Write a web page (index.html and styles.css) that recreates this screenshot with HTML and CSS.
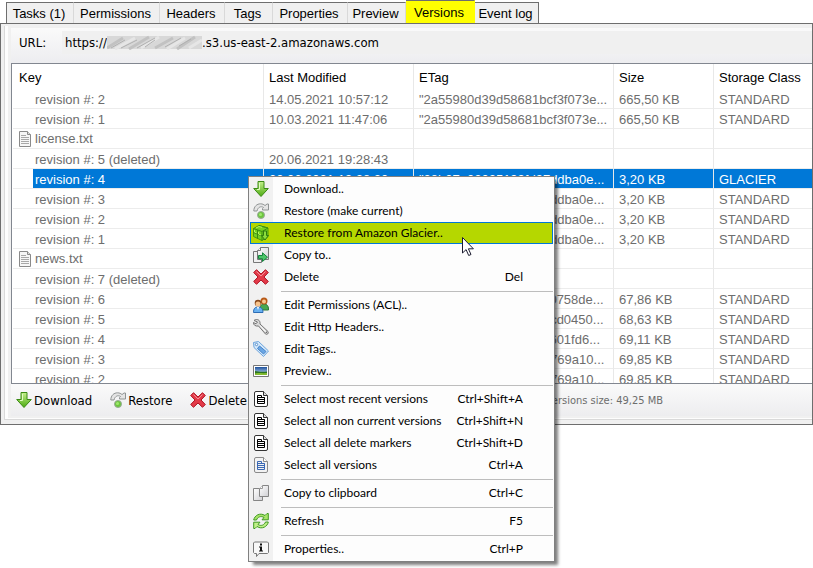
FILE: index.html
```html
<!DOCTYPE html>
<html lang="en">
<head>
<meta charset="utf-8">
<title>Versions</title>
<link rel="stylesheet" href="styles.css">
</head>
<body>

<!-- icon sprite -->
<svg class="sprite" aria-hidden="true">
  <defs>
    <linearGradient id="green" x1="0" y1="0" x2="0" y2="1">
      <stop offset="0" stop-color="#c4f08c"/>
      <stop offset="1" stop-color="#4caa10"/>
    </linearGradient>
    <linearGradient id="sky" x1="0" y1="0" x2="0" y2="1">
      <stop offset="0" stop-color="#1b4f9c"/>
      <stop offset="1" stop-color="#d8ecf8"/>
    </linearGradient>
    <linearGradient id="paper" x1="0" y1="0" x2="1" y2="1">
      <stop offset="0" stop-color="#ffffff"/>
      <stop offset="1" stop-color="#d0d0d4"/>
    </linearGradient>
  </defs>
  <symbol id="i-file" viewBox="0 0 16 16">
    <path d="M2.500.5h8l3 3v12h-11z" fill="#f6f6f6" stroke="#8a8a8a"/>
    <path d="M10.500.5v3h3" fill="#ddd" stroke="#8a8a8a"/>
    <path d="M4 4.500h5M4 6.500h8M4 8.500h8M4 10.500h8M4 12.500h8" stroke="#a8a8a8" fill="none"/>
  </symbol>
  <symbol id="i-down" viewBox="0 0 16 16">
    <path d="M5 .5h6v7h4.300L8 15.500.700 7.500H5z" fill="url(#green)" stroke="#3a8a14"/>
    <path d="M6.500 2v6.500H4" fill="none" stroke="#e2fbc4"/>
  </symbol>
  <symbol id="i-restore" viewBox="0 0 16 16">
    <path d="M.8 8C.8 3.500 4 .8 7.500 .8c2 0 3.500.8 4.500 1.800L14 1h1.500v6H9.500V5.500l1-1C8 2.800 5 4 4 8z" fill="#e4e4e4" stroke="#909494"/>
    <circle cx="8" cy="12" r="3.500" fill="#6cc83c" stroke="#9aa89a"/>
    <circle cx="7.500" cy="11.500" r="1.500" fill="#a0e870"/>
  </symbol>
  <symbol id="i-glacier" viewBox="0 0 16 16">
    <path d="M.5 3.500 6 .5l9 2.500v8.500l-6 4-8.500-4z" fill="#74d020" stroke="#4a9a08"/>
    <path d="M.5 3.500 9 6.500l6-3.500M9 6.500v9M4.500 5v8.500M.5 7.500 9 11M6 .5 15 3" fill="none" stroke="#3c8c10"/>
    <path d="M1.500 5v2l2 .8M5.500 7v2l2.500 1M3 3l3-1.500 3 .8" fill="none" stroke="#b8f460"/>
    <path d="M10.500 6h3v4.500h2L12 15 8.500 10.500h2z" fill="#8cdc3c" stroke="#2f7c10"/>
  </symbol>
  <symbol id="i-copyto" viewBox="0 0 16 16">
    <path d="M.5 4.500h8v11h-8z" fill="#f0f0f0" stroke="#777"/>
    <path d="M4.500 3.500l3-3h8v12h-11z" fill="url(#paper)" stroke="#777"/>
    <path d="M4.500 3.500h3v-3" fill="#fff" stroke="#777"/>
    <path d="M5.500 8.500h4V5.800l5 4.400-5 4.300v-2.800h-4z" fill="#4cc468" stroke="#14843c"/>
  </symbol>
  <symbol id="i-delete" viewBox="0 0 16 16">
    <path d="M3.500.7 8 5 12.500.7l2.800 2.800L11 8l4.300 4.500-2.800 2.800L8 11l-4.500 4.300-2.800-2.800L5 8 .7 3.500z" fill="#e23a48" stroke="#b01424"/>
    <path d="M3.500 2.500 8 7l4.500-4.500" fill="none" stroke="#f49098"/>
  </symbol>
  <symbol id="i-users" viewBox="0 0 16 16">
    <path d="M7 13c0-4 1-6 4-6s4.500 2 4.500 5v1z" fill="#48a850" stroke="#2a7a38"/>
    <circle cx="11" cy="4" r="3.500" fill="#b85a18"/>
    <circle cx="11" cy="4.500" r="2" fill="#f8c890"/>
    <path d="M.5 15.500c0-4 1.500-5.500 4.500-5.500s5 1.500 5 5.500z" fill="#68b0f0" stroke="#2c6cb4"/>
    <circle cx="5" cy="6" r="3.300" fill="#8a4a1c"/>
    <circle cx="5" cy="7" r="2.500" fill="#f8c48c"/>
    <path d="M4 10l1 3 1-3z" fill="#fff"/>
  </symbol>
  <symbol id="i-wrench" viewBox="0 0 16 16">
    <path d="M1 1.500C3-.3 6.500.2 7 3.500L7 5l8 7.500c1 2-.8 3.500-2.500 2.500L5.500 7C2.500 7.500.3 6 .5 3.500l2.500 1.300L4.500 3z" fill="#dadada" stroke="#747474"/>
    <path d="M7 6.500l6 6.500" stroke="#fff"/>
    <circle cx="13.300" cy="13.300" r=".7" fill="#555"/>
  </symbol>
  <symbol id="i-tag" viewBox="0 0 16 16">
    <path d="M.5 1.500 5.500.5l10 9.500-5 5.500L1 6.500z" fill="#d4e8fa" stroke="#6ca4dc"/>
    <path d="M6.500 5 13 10.500 10.500 13 4.500 7.500z" fill="#6aa6e4" stroke="#4884c8"/>
    <circle cx="3.500" cy="3.500" r="1.200" fill="#fff" stroke="#5890cc"/>
  </symbol>
  <symbol id="i-picture" viewBox="0 0 16 16">
    <path d="M.5 2.500h15v11H.5z" fill="#fff" stroke="#777"/>
    <path d="M2 4h12v8H2z" fill="url(#sky)"/>
    <path d="M2 8c3 0 5 1.500 12 .5V12H2z" fill="#2c7424"/>
    <path d="M2 10.500c4-1 7 0 12-.5v2H2z" fill="#84bc30"/>
  </symbol>
  <symbol id="i-doc" viewBox="0 0 16 16">
    <path d="M3 .5h7.500l4 4V14q0 1.500-1.500 1.500H3Q1.500 15.500 1.500 14V2Q1.500.5 3 .5z" fill="#fff" stroke="#333"/>
    <path d="M10.500.5v4h4" fill="#ddd" stroke="#333"/>
    <path d="M4.500 4.500h4v2h3v6h-7zM4.500 6.500h7M4.500 8.500h7M4.500 10.500h7" fill="none" stroke="currentColor"/>
  </symbol>
  <symbol id="i-doc-light" viewBox="0 0 16 16">
    <path d="M3 .5h7.500l4 4V14q0 1.500-1.500 1.500H3Q1.500 15.500 1.500 14V2Q1.500.5 3 .5z" fill="#f2f2f2" stroke="#8a8a8a"/>
    <path d="M10.500.5v4h4" fill="#fff" stroke="#8a8a8a"/>
    <path d="M4.500 4.500h4v2h3v6h-7zM4.500 6.500h7M4.500 8.500h7M4.500 10.500h7" fill="none" stroke="#3a68b4"/>
  </symbol>
  <symbol id="i-copy" viewBox="0 0 16 16">
    <path d="M.5 3.500h9v12h-9z" fill="url(#paper)" stroke="#858585"/>
    <path d="M6.500 3.500l3-3h6v11h-9z" fill="url(#paper)" stroke="#858585"/>
    <path d="M6.500 3.500h3v-3" fill="#fff" stroke="#999"/>
  </symbol>
  <symbol id="i-refresh" viewBox="0 0 16 16">
    <path d="M.7 7C1.500 2.500 7-.8 12 2.500L14 .5h1.300v6.300H9L11 4.500C8 2.500 4.500 4 3.500 7z" fill="#a8e468" stroke="#3f9a20"/>
    <path d="M15.300 9c-.8 4.500-6.300 7.800-11.300 4.500l-2 2H.7V9.200H7l-2 2.300c3 2 6.500.5 7.500-2.500z" fill="#c0f088" stroke="#3f9a20"/>
  </symbol>
  <symbol id="i-info" viewBox="0 0 16 16">
    <path d="M1.500 1h13l1 1v9.500l-1 1H6L3.500 15.500v-3h-2l-1-1V2z" fill="#f8f8f8" stroke="#777"/>
    <path d="M7 2.500h2v2H7zM6 5.500h3v4h1v1H6v-1h1v-3H6z" fill="#111"/>
  </symbol>
</svg>

<div class="panel">
  <div class="tabs" role="tablist">
    <button class="tab" role="tab">Tasks (1)</button>
    <button class="tab" role="tab">Permissions</button>
    <button class="tab" role="tab">Headers</button>
    <button class="tab" role="tab">Tags</button>
    <button class="tab" role="tab">Properties</button>
    <button class="tab" role="tab">Preview</button>
    <button class="tab active" role="tab" aria-selected="true">Versions</button>
    <button class="tab" role="tab">Event log</button>
  </div>

  <div class="page">
    <div class="content">
      <div class="view">
        <div class="url-bar">
          <label for="url">URL:</label>
          <output id="url" class="url-box">
            <span>https://</span>
            <svg class="smudge" viewBox="0 0 95 15">
              <path d="M0 1h95v13H0z" fill="#d8d8d8"/>
              <path d="M0 13 16 3M22 14 42 2M48 13 66 3M70 14 88 2" stroke="#c2c2c2" stroke-width="3"/>
              <path d="M8 14 28 3M34 13 52 2M60 14 78 3M82 13 95 5" stroke="#e6e6e6" stroke-width="3"/>
              <path d="M4 13 18 5M14 13 30 5M30 13 48 3M38 12 48 5M58 12 74 3M72 11 84 4" stroke="#b0b0b0"/>
            </svg>
            <span>.s3.us-east-2.amazonaws.com</span>
          </output>
        </div>

        <div class="list">
          <table>
            <colgroup>
              <col class="c-key"><col class="c-date"><col class="c-etag"><col class="c-size"><col>
            </colgroup>
            <thead>
              <tr><th>Key</th><th>Last Modified</th><th>ETag</th><th>Size</th><th>Storage Class</th></tr>
            </thead>
            <tbody>
              <tr><td>revision #: 2</td><td>14.05.2021 10:57:12</td><td>"2a55980d39d58681bcf3f073e...</td><td>665,50 KB</td><td>STANDARD</td></tr>
              <tr><td>revision #: 1</td><td>10.03.2021 11:47:06</td><td>"2a55980d39d58681bcf3f073e...</td><td>665,50 KB</td><td>STANDARD</td></tr>
              <tr class="file"><td><svg class="icon"><use href="#i-file"/></svg>license.txt</td><td></td><td></td><td></td><td></td></tr>
              <tr><td>revision #: 5 (deleted)</td><td>20.06.2021 19:28:43</td><td></td><td></td><td></td></tr>
              <tr class="selected"><td>revision #: 4</td><td>20.06.2021 19:28:20</td><td>"28b07e02025199fd97ddba0e...</td><td>3,20 KB</td><td>GLACIER</td></tr>
              <tr><td>revision #: 3</td><td></td><td>"28b07e02025199fd97ddba0e...</td><td>3,20 KB</td><td>STANDARD</td></tr>
              <tr><td>revision #: 2</td><td></td><td>"28b07e02025199fd97ddba0e...</td><td>3,20 KB</td><td>STANDARD</td></tr>
              <tr><td>revision #: 1</td><td></td><td>"28b07e02025199fd97ddba0e...</td><td>3,20 KB</td><td>STANDARD</td></tr>
              <tr class="file"><td><svg class="icon"><use href="#i-file"/></svg>news.txt</td><td></td><td></td><td></td><td></td></tr>
              <tr><td>revision #: 7 (deleted)</td><td></td><td></td><td></td><td></td></tr>
              <tr><td>revision #: 6</td><td></td><td>"5e2fc81a90b47d36e20758de...</td><td>67,86 KB</td><td>STANDARD</td></tr>
              <tr><td>revision #: 5</td><td></td><td>"90bf3de718a2465e70cd0450...</td><td>68,63 KB</td><td>STANDARD</td></tr>
              <tr><td>revision #: 4</td><td></td><td>"c71fe0593ab8264d9e601fd6...</td><td>69,11 KB</td><td>STANDARD</td></tr>
              <tr><td>revision #: 3</td><td></td><td>"47df80ea6259b310e8769a10...</td><td>69,85 KB</td><td>STANDARD</td></tr>
              <tr><td>revision #: 2</td><td></td><td>"47df80ea6259b310e8769a10...</td><td>69,85 KB</td><td>STANDARD</td></tr>
            </tbody>
          </table>
        </div>

        <div class="actions">
          <button class="action"><svg class="icon"><use href="#i-down"/></svg>Download</button>
          <button class="action"><svg class="icon"><use href="#i-restore"/></svg>Restore</button>
          <button class="action"><svg class="icon"><use href="#i-delete"/></svg>Delete</button>
          <span class="status">Versions size: 49,25 MB</span>
        </div>
      </div>
    </div>
  </div>
</div>

<div class="menu" role="menu">
  <button class="item" role="menuitem"><svg class="icon"><use href="#i-down"/></svg><span>Download..</span></button>
  <button class="item" role="menuitem"><svg class="icon"><use href="#i-restore"/></svg><span>Restore (make current)</span></button>
  <button class="item hot" role="menuitem"><svg class="icon"><use href="#i-glacier"/></svg><span>Restore from Amazon Glacier..</span></button>
  <button class="item" role="menuitem"><svg class="icon"><use href="#i-copyto"/></svg><span>Copy to..</span></button>
  <button class="item" role="menuitem"><svg class="icon"><use href="#i-delete"/></svg><span>Delete</span><span class="key">Del</span></button>
  <hr>
  <button class="item" role="menuitem"><svg class="icon"><use href="#i-users"/></svg><span>Edit Permissions (ACL)..</span></button>
  <button class="item" role="menuitem"><svg class="icon"><use href="#i-wrench"/></svg><span>Edit Http Headers..</span></button>
  <button class="item" role="menuitem"><svg class="icon"><use href="#i-tag"/></svg><span>Edit Tags..</span></button>
  <button class="item" role="menuitem"><svg class="icon"><use href="#i-picture"/></svg><span>Preview..</span></button>
  <hr>
  <button class="item" role="menuitem"><svg class="icon"><use href="#i-doc"/></svg><span>Select most recent versions</span><span class="key">Ctrl+Shift+A</span></button>
  <button class="item" role="menuitem"><svg class="icon"><use href="#i-doc"/></svg><span>Select all non current versions</span><span class="key">Ctrl+Shift+N</span></button>
  <button class="item" role="menuitem"><svg class="icon"><use href="#i-doc"/></svg><span>Select all delete markers</span><span class="key">Ctrl+Shift+D</span></button>
  <button class="item" role="menuitem"><svg class="icon"><use href="#i-doc-light"/></svg><span>Select all versions</span><span class="key">Ctrl+A</span></button>
  <hr>
  <button class="item" role="menuitem"><svg class="icon"><use href="#i-copy"/></svg><span>Copy to clipboard</span><span class="key">Ctrl+C</span></button>
  <hr>
  <button class="item" role="menuitem"><svg class="icon"><use href="#i-refresh"/></svg><span>Refresh</span><span class="key">F5</span></button>
  <hr>
  <button class="item" role="menuitem"><svg class="icon"><use href="#i-info"/></svg><span>Properties..</span><span class="key">Ctrl+P</span></button>
</div>

<svg class="cursor" viewBox="0 0 12 19">
  <path d="M.5.5v15.500l3.600-3.400 2.600 5.900 2.300-1-2.600-5.700h5z" fill="#fff" stroke="#1c1c30"/>
</svg>

</body>
</html>
```
FILE: styles.css
```css
* {
  box-sizing: border-box;
}

body {
  margin: 0;
  background: #fff;
  color: #000;
  font-family: "Liberation Sans", Arial, sans-serif;
  font-size: 13px;
  overflow: hidden;
}

button {
  margin: 0;
  padding: 0;
  border: none;
  background: none;
  color: inherit;
  font: inherit;
}

.sprite {
  position: absolute;
  width: 0;
  height: 0;
}

.icon {
  width: 16px;
  height: 16px;
  flex: none;
}

/* tabs */
.tabs {
  display: grid;
  grid-template-columns: 68px 86px 65px 48px 75px 58px 69px 64px;
  align-items: end;
  height: 23px;
  padding-left: 6px;
}

.tab {
  height: 21px;
  padding-right: 2px;
  background: #f0f0f0;
  border-top: 1px solid #6e6e6e;
  border-right: 1px solid #d9d9d9;
  white-space: nowrap;
}

.tab:first-child {
  border-left: 1px solid #6e6e6e;
}

.tab:last-child {
  border-right-color: #6e6e6e;
}

.tab.active {
  height: 23px;
  background: #ff0;
  border-right-color: #ff0;
}

/* page frame */
.page {
  padding: 2px 0 4px 3px;
  background: #f0f0f0;
  border: 1px solid #6e6e6e;
}

.content {
  padding: 0 0 1px 3px;
  border-left: 1px solid #d9d9d9;
  border-bottom: 1px solid #d9d9d9;
  background: #fdfdfd;
}

.view {
  padding: 2px 0 2px 3px;
  background: #f0f0f0;
}

.url-bar {
  display: flex;
  align-items: center;
  height: 35px;
  padding: 0 0 6px 8px;
  background: linear-gradient(#fafafa, #ededf0);
  font: 13px "DejaVu Sans Condensed", Tahoma, sans-serif;
}

.url-bar label {
  width: 43px;
}

.url-box {
  display: flex;
  flex: 1;
  align-items: center;
  height: 23px;
  padding-left: 3px;
  background: #f0f0f0;
}

.smudge {
  width: 95px;
  height: 15px;
}

/* versions list */
.list {
  height: 321px;
  padding-left: 1px;
  overflow: hidden;
  background: #fff;
  border: 1px solid #828790;
  border-right: none;
}

table {
  width: 100%;
  border-collapse: separate;
  border-spacing: 0;
  table-layout: fixed;
}

.c-key {
  width: 251px;
}

.c-date {
  width: 150px;
}

.c-etag {
  width: 200px;
}

.c-size {
  width: 100px;
}

th, td {
  padding: 2px 0 0 5px;
  overflow: hidden;
  border-right: 1px solid #e8e8e8;
  font-weight: normal;
  text-align: left;
  white-space: nowrap;
}

th {
  height: 25px;
}

th:first-child {
  padding-left: 6px;
}

td {
  height: 20px;
  border-bottom: 1px solid #ececec;
  color: #6d6d6d;
}

th:last-child, td:last-child {
  border-right: none;
}

td:first-child {
  padding-left: 22px;
}

.file td:first-child {
  padding: 0 0 0 4px;
}

.file .icon {
  margin-right: 2px;
  vertical-align: -4px;
}

.selected td {
  background: #0078d7;
  color: #fff;
}

.selected td:first-child {
  background: linear-gradient(to right, #fff 20px, #0078d7 20px);
}

/* bottom buttons */
.actions {
  display: flex;
  align-items: center;
  gap: 18px;
  height: 32px;
  padding-left: 5px;
  background: linear-gradient(#fafafa, #ededef);
  font: 13px "DejaVu Sans Condensed", Tahoma, sans-serif;
}

.action {
  display: flex;
  align-items: center;
  gap: 2px;
}

.status {
  margin: 0 149px 0 auto;
  color: #6d6d6d;
  font-size: 11px;
}

/* context menu */
.menu {
  position: absolute;
  top: 176px;
  left: 248px;
  width: 307px;
  padding: 1px;
  background: linear-gradient(to right, #f1f1f1 24px, #fdfdfd 24px);
  border: 1px solid #808080;
  box-shadow: 4px 4px 3px -1px rgba(0, 0, 0, 0.5);
  font: 12px Lato, "Segoe UI", sans-serif;
}

.item {
  display: flex;
  align-items: center;
  gap: 15px;
  width: 100%;
  height: 22px;
  padding: 0 30px 0 3px;
  text-align: left;
  white-space: nowrap;
}

.item span {
  padding-bottom: 2px;
}

.item.hot {
  background: #b5d700;
  outline: 1px solid #0078d7;
  outline-offset: -1px;
}

.key {
  margin-left: auto;
}

.menu hr {
  height: 1px;
  margin: 3px 0 2px 31px;
  border: none;
  background: #bdbdbd;
}

.cursor {
  position: absolute;
  top: 237px;
  left: 462px;
  width: 12px;
  height: 19px;
}
```
